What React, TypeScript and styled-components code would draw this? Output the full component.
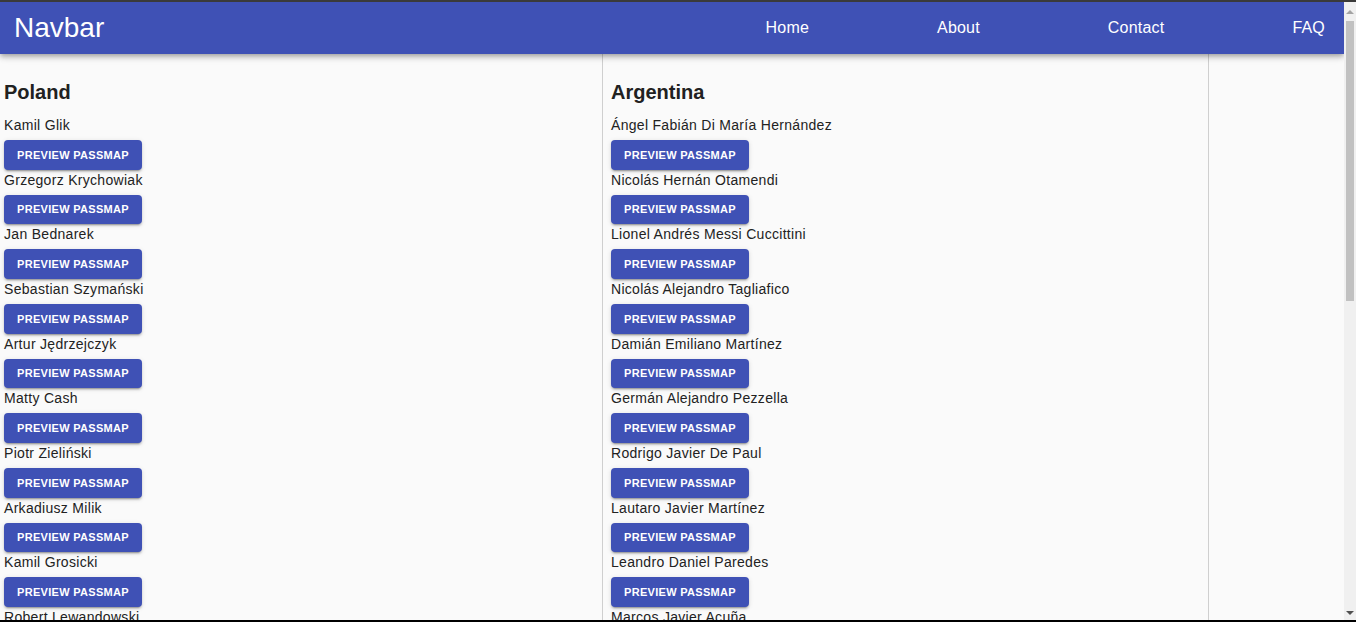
import React from "react";
import styled, { createGlobalStyle } from "styled-components";

const GlobalStyle = createGlobalStyle`
  html, body {
    margin: 0;
    padding: 0;
    background: #fafafa;
    font-family: "Liberation Sans", Arial, Helvetica, sans-serif;
  }
  * { box-sizing: border-box; }
`;

const Frame = styled.div`
  height: 622px;
  display: flex;
  flex-direction: column;
  overflow: hidden;
  background: #fafafa;
`;

const TopEdge = styled.div`
  height: 2px;
  flex: none;
  background: #3a3a3a;
`;

const BottomEdge = styled.div`
  height: 2px;
  flex: none;
  background: #000;
`;

const Viewport = styled.div`
  flex: 1;
  min-height: 0;
  display: flex;
`;

const Page = styled.div`
  flex: 1;
  min-width: 0;
  display: flex;
  flex-direction: column;
  overflow: hidden;
`;

const AppBar = styled.header`
  height: 52px;
  flex: none;
  display: flex;
  align-items: center;
  padding: 0 19px 0 14px;
  background: #3f51b5;
  color: #fff;
  position: relative;
  z-index: 1;
  box-shadow: 0 2px 4px -1px rgba(0, 0, 0, 0.2), 0 4px 5px 0 rgba(0, 0, 0, 0.14),
    0 1px 10px 0 rgba(0, 0, 0, 0.12);
`;

const Brand = styled.div`
  font-size: 28px;
  line-height: 32px;
`;

const NavLinks = styled.nav`
  margin-left: auto;
  display: flex;
  gap: 128px;
`;

const NavLink = styled.a`
  color: #fff;
  font-size: 16px;
  line-height: 20px;
  letter-spacing: 0.2px;
  text-decoration: none;
  margin-top: -1px;
`;

const Columns = styled.main`
  flex: 1;
  min-height: 0;
  display: grid;
  grid-template-columns: 603px 606px 1fr;
`;

const TeamColumn = styled.section<{ $pad: number; $bordered: boolean }>`
  padding-left: ${(p) => p.$pad}px;
  border-right: ${(p) => (p.$bordered ? "1px solid #cfcfcf" : "none")};
  overflow: hidden;
`;

const TeamName = styled.h2`
  margin: 26px 0 11px;
  font-size: 20px;
  line-height: 24px;
  font-weight: bold;
  color: #212121;
`;

const Player = styled.div`
  display: flex;
  flex-direction: column;
  align-items: flex-start;
`;

const PlayerName = styled.div`
  font-size: 14px;
  line-height: 20px;
  letter-spacing: 0.3px;
  color: #222;
  white-space: nowrap;
`;

const PassButton = styled.button`
  margin-top: 5px;
  height: 29.67px;
  padding: 0 13px;
  border: none;
  border-radius: 4px;
  background: #3f51b5;
  color: #fff;
  font-family: "Liberation Sans", Arial, Helvetica, sans-serif;
  font-size: 11px;
  font-weight: bold;
  letter-spacing: 0.3px;
  text-transform: uppercase;
  cursor: pointer;
  box-shadow: 0 3px 1px -2px rgba(0, 0, 0, 0.2), 0 2px 2px 0 rgba(0, 0, 0, 0.14),
    0 1px 5px 0 rgba(0, 0, 0, 0.12);
`;

const Scrollbar = styled.div`
  width: 12px;
  flex: none;
  background: #f0f0f0;
  display: flex;
  flex-direction: column;
  align-items: center;
`;

const Arrow = styled.div<{ $down?: boolean }>`
  width: 0;
  height: 0;
  margin: ${(p) => (p.$down ? "auto 0 5px" : "8px 0 5px")};
  border-left: 4px solid transparent;
  border-right: 4px solid transparent;
  ${(p) =>
    p.$down
      ? "border-top: 4px solid #505050;"
      : "border-bottom: 4px solid #a3a3a3;"}
`;

const Thumb = styled.div`
  width: 8px;
  height: 280px;
  margin-top: 2px;
  background: #c1c1c1;
`;

const teams = [
  {
    name: "Poland",
    pad: 4,
    players: [
      "Kamil Glik",
      "Grzegorz Krychowiak",
      "Jan Bednarek",
      "Sebastian Szymański",
      "Artur Jędrzejczyk",
      "Matty Cash",
      "Piotr Zieliński",
      "Arkadiusz Milik",
      "Kamil Grosicki",
      "Robert Lewandowski",
      "Wojciech Szczęsny",
    ],
  },
  {
    name: "Argentina",
    pad: 8,
    players: [
      "Ángel Fabián Di María Hernández",
      "Nicolás Hernán Otamendi",
      "Lionel Andrés Messi Cuccittini",
      "Nicolás Alejandro Tagliafico",
      "Damián Emiliano Martínez",
      "Germán Alejandro Pezzella",
      "Rodrigo Javier De Paul",
      "Lautaro Javier Martínez",
      "Leandro Daniel Paredes",
      "Marcos Javier Acuña",
      "Julián Álvarez",
    ],
  },
];

export default function App() {
  return (
    <>
      <GlobalStyle />
      <Frame>
        <TopEdge />
        <Viewport>
          <Page>
            <AppBar>
              <Brand>Navbar</Brand>
              <NavLinks>
                <NavLink href="#">Home</NavLink>
                <NavLink href="#">About</NavLink>
                <NavLink href="#">Contact</NavLink>
                <NavLink href="#">FAQ</NavLink>
              </NavLinks>
            </AppBar>
            <Columns>
              {teams.map((team) => (
                <TeamColumn key={team.name} $pad={team.pad} $bordered>
                  <TeamName>{team.name}</TeamName>
                  {team.players.map((p) => (
                    <Player key={p}>
                      <PlayerName>{p}</PlayerName>
                      <PassButton>Preview passmap</PassButton>
                    </Player>
                  ))}
                </TeamColumn>
              ))}
              <TeamColumn $pad={0} $bordered={false} />
            </Columns>
          </Page>
          <Scrollbar>
            <Arrow />
            <Thumb />
            <Arrow $down />
          </Scrollbar>
        </Viewport>
        <BottomEdge />
      </Frame>
    </>
  );
}
